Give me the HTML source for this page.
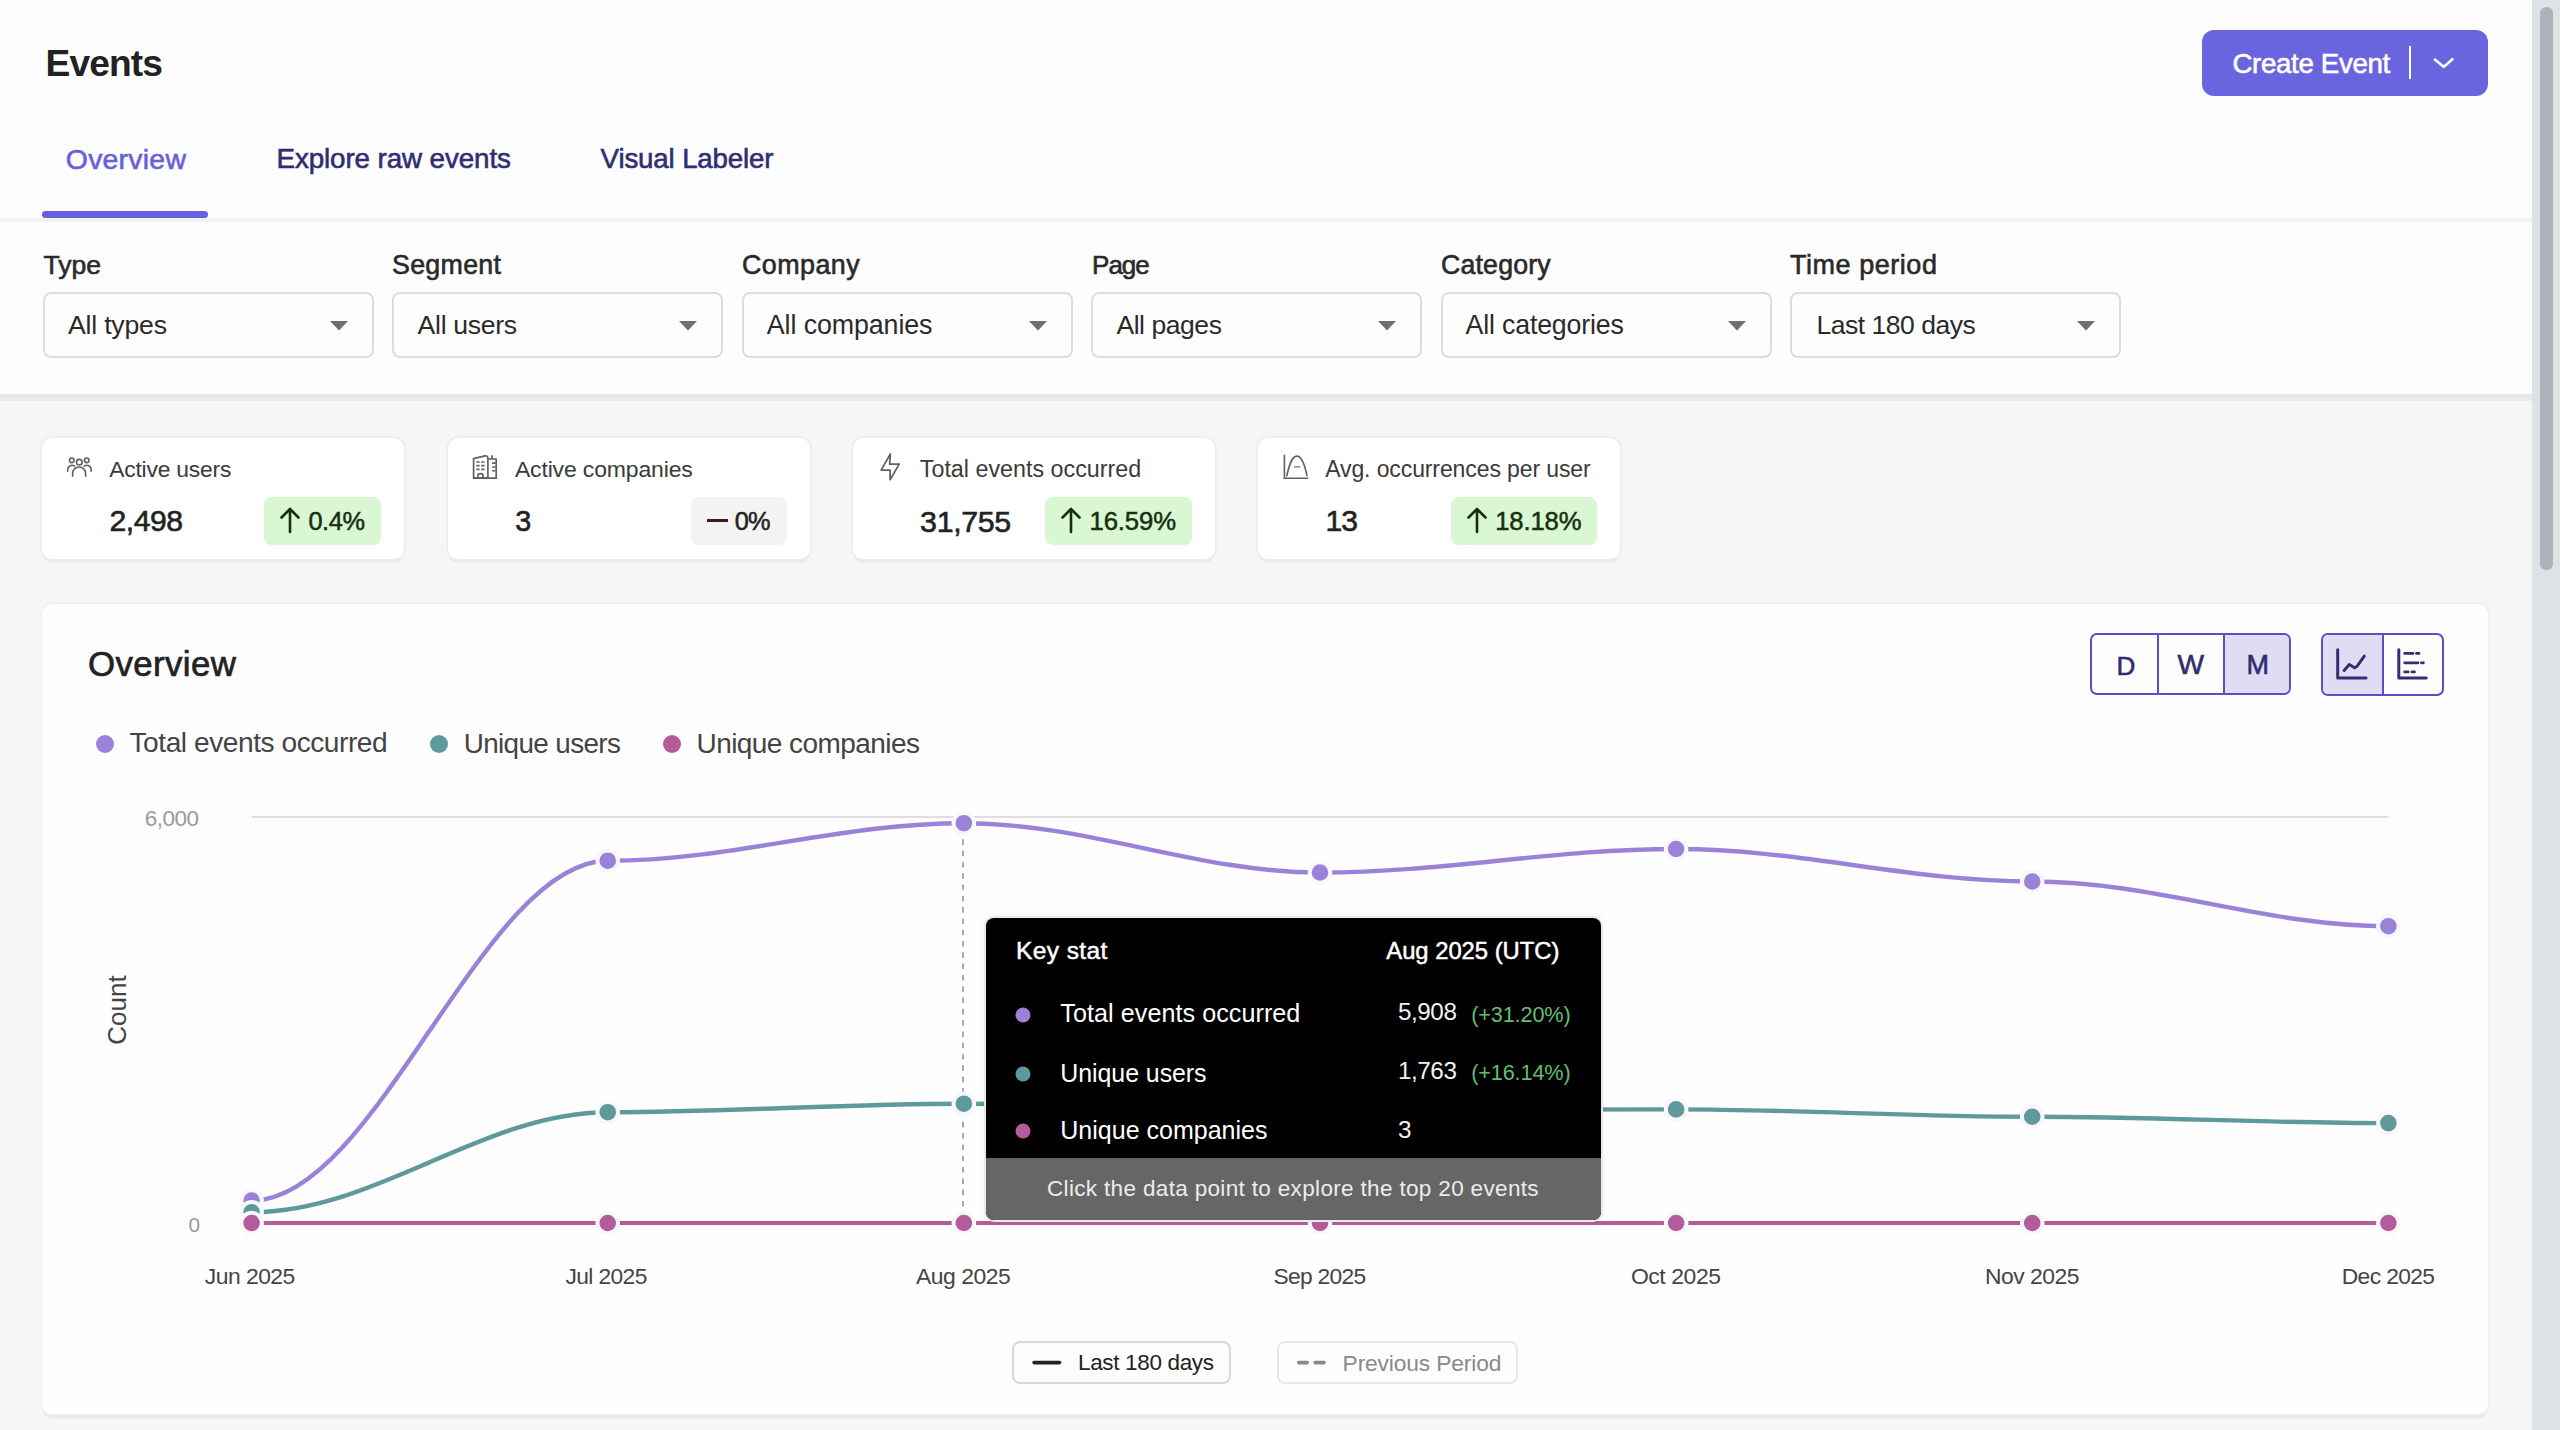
<!DOCTYPE html>
<html><head><meta charset="utf-8"><title>Events</title>
<style>
html,body{margin:0;padding:0;width:2560px;height:1430px;overflow:hidden;background:#f6f6f6;font-family:"Liberation Sans",sans-serif}
.t{position:absolute;white-space:nowrap;line-height:1;font-family:"Liberation Sans",sans-serif}
</style></head><body>
<div style="position:absolute;left:0;top:0;width:2532px;height:218px;background:#fdfdfd"></div>
<div style="position:absolute;left:0;top:218px;width:2532px;height:4px;background:#f1f2f3"></div>
<div style="position:absolute;left:0;top:222px;width:2532px;height:171.5px;background:#fdfdfd"></div>
<div style="position:absolute;left:0;top:393.5px;width:2532px;height:4px;background:#e5e8ea"></div>
<div style="position:absolute;left:0;top:397.5px;width:2532px;height:3.5px;background:#ebebeb"></div>
<div style="position:absolute;left:2532px;top:0;width:28px;height:1430px;background:#dfe2e5"></div>
<div style="position:absolute;left:2540px;top:7px;width:12.5px;height:563px;background:#adb3bb;border-radius:6px"></div>
<div class="t" style="left:45.60px;top:45.04px;font-size:37.16px;font-weight:700;color:#222222;letter-spacing:-0.890px;">Events</div>
<div style="position:absolute;left:2202px;top:29.6px;width:285.7px;height:66px;background:#6965df;border-radius:12px"></div>
<div class="t" style="left:2232.40px;top:49.75px;font-size:27.70px;font-weight:400;color:#ffffff;letter-spacing:-0.341px;-webkit-text-stroke:0.6px #ffffff;">Create Event</div>
<div style="position:absolute;left:2409px;top:46px;width:2px;height:33px;background:#ffffff"></div>
<svg style="position:absolute;left:2420px;top:45px" width="50" height="35"><polyline points="14.9,14.6 23.7,21.9 32.4,14.2" fill="none" stroke="#fff" stroke-width="2.6" stroke-linecap="round" stroke-linejoin="miter"/></svg>
<div class="t" style="left:65.80px;top:144.71px;font-size:28.40px;font-weight:400;color:#6760dc;letter-spacing:0.252px;-webkit-text-stroke:0.6px #6760dc;">Overview</div>
<div class="t" style="left:276.50px;top:145.24px;font-size:27.78px;font-weight:400;color:#302e72;letter-spacing:-0.101px;-webkit-text-stroke:0.6px #302e72;">Explore raw events</div>
<div class="t" style="left:600.60px;top:145.32px;font-size:27.68px;font-weight:400;color:#302e72;letter-spacing:-0.146px;-webkit-text-stroke:0.6px #302e72;">Visual Labeler</div>
<div style="position:absolute;left:42.3px;top:211px;width:166px;height:7px;background:#6760dc;border-radius:4px"></div>
<div class="t" style="left:43.40px;top:251.99px;font-size:26.59px;font-weight:400;color:#2a2a2a;letter-spacing:-0.015px;-webkit-text-stroke:0.6px #2a2a2a;">Type</div>
<div style="position:absolute;left:43.00px;top:292px;width:331px;height:66px;box-sizing:border-box;border:2px solid #dcdbe9;border-radius:8px;background:#fdfdfd"></div>
<div class="t" style="left:68.00px;top:311.91px;font-size:26.68px;font-weight:400;color:#2a2a2a;letter-spacing:-0.229px;">All types</div>
<svg style="position:absolute;left:330.00px;top:321px" width="18" height="10"><polygon points="0,0 18,0 9,9.5" fill="#6f6f6f"/></svg>
<div class="t" style="left:392.00px;top:251.82px;font-size:26.79px;font-weight:400;color:#2a2a2a;letter-spacing:0.298px;-webkit-text-stroke:0.6px #2a2a2a;">Segment</div>
<div style="position:absolute;left:392.40px;top:292px;width:331px;height:66px;box-sizing:border-box;border:2px solid #dcdbe9;border-radius:8px;background:#fdfdfd"></div>
<div class="t" style="left:417.60px;top:311.97px;font-size:26.61px;font-weight:400;color:#2a2a2a;letter-spacing:-0.308px;">All users</div>
<svg style="position:absolute;left:679.40px;top:321px" width="18" height="10"><polygon points="0,0 18,0 9,9.5" fill="#6f6f6f"/></svg>
<div class="t" style="left:742.00px;top:251.76px;font-size:26.87px;font-weight:400;color:#2a2a2a;letter-spacing:0.450px;-webkit-text-stroke:0.6px #2a2a2a;">Company</div>
<div style="position:absolute;left:741.80px;top:292px;width:331px;height:66px;box-sizing:border-box;border:2px solid #dcdbe9;border-radius:8px;background:#fdfdfd"></div>
<div class="t" style="left:766.80px;top:311.81px;font-size:26.81px;font-weight:400;color:#2a2a2a;letter-spacing:-0.098px;">All companies</div>
<svg style="position:absolute;left:1028.80px;top:321px" width="18" height="10"><polygon points="0,0 18,0 9,9.5" fill="#6f6f6f"/></svg>
<div class="t" style="left:1092.10px;top:252.47px;font-size:26.02px;font-weight:400;color:#2a2a2a;letter-spacing:-1.052px;-webkit-text-stroke:0.6px #2a2a2a;">Page</div>
<div style="position:absolute;left:1091.20px;top:292px;width:331px;height:66px;box-sizing:border-box;border:2px solid #dcdbe9;border-radius:8px;background:#fdfdfd"></div>
<div class="t" style="left:1116.40px;top:312.05px;font-size:26.52px;font-weight:400;color:#2a2a2a;letter-spacing:-0.448px;">All pages</div>
<svg style="position:absolute;left:1378.20px;top:321px" width="18" height="10"><polygon points="0,0 18,0 9,9.5" fill="#6f6f6f"/></svg>
<div class="t" style="left:1441.00px;top:251.87px;font-size:26.73px;font-weight:400;color:#2a2a2a;letter-spacing:0.176px;-webkit-text-stroke:0.6px #2a2a2a;">Category</div>
<div style="position:absolute;left:1440.60px;top:292px;width:331px;height:66px;box-sizing:border-box;border:2px solid #dcdbe9;border-radius:8px;background:#fdfdfd"></div>
<div class="t" style="left:1465.60px;top:311.87px;font-size:26.73px;font-weight:400;color:#2a2a2a;letter-spacing:-0.173px;">All categories</div>
<svg style="position:absolute;left:1727.60px;top:321px" width="18" height="10"><polygon points="0,0 18,0 9,9.5" fill="#6f6f6f"/></svg>
<div class="t" style="left:1790.00px;top:251.62px;font-size:27.03px;font-weight:400;color:#2a2a2a;letter-spacing:0.528px;-webkit-text-stroke:0.6px #2a2a2a;">Time period</div>
<div style="position:absolute;left:1790.00px;top:292px;width:331px;height:66px;box-sizing:border-box;border:2px solid #dcdbe9;border-radius:8px;background:#fdfdfd"></div>
<div class="t" style="left:1816.40px;top:312.07px;font-size:26.50px;font-weight:400;color:#2a2a2a;letter-spacing:-0.469px;">Last 180 days</div>
<svg style="position:absolute;left:2077.00px;top:321px" width="18" height="10"><polygon points="0,0 18,0 9,9.5" fill="#6f6f6f"/></svg>
<div style="position:absolute;left:42.2px;top:438px;width:361.8px;height:121px;background:#ffffff;border-radius:10px;box-shadow:0 0 0 1.6px #ececed, 0 3.6px 0 0 #e8e9ea"></div>
<div class="t" style="left:109.20px;top:458.26px;font-size:22.85px;font-weight:400;color:#3a3a3a;letter-spacing:-0.202px;">Active users</div>
<div class="t" style="left:109.50px;top:506.06px;font-size:30.17px;font-weight:400;color:#222222;letter-spacing:-0.495px;-webkit-text-stroke:0.6px #222222;">2,498</div>
<div style="position:absolute;left:263.9px;top:496.6px;width:117.1px;height:48px;background:#d8f7d2;border-radius:8px"></div>
<svg style="position:absolute;left:279.9px;top:506px" width="22" height="28"><path d="M10 26 V3 M1.5 11.5 L10 3 L18.5 11.5" fill="none" stroke="#16300f" stroke-width="2.6" stroke-linecap="round" stroke-linejoin="round"/></svg>
<div class="t" style="left:308.40px;top:508.94px;font-size:25.35px;font-weight:400;color:#16300f;letter-spacing:-0.394px;-webkit-text-stroke:0.5px #16300f;">0.4%</div>
<div style="position:absolute;left:447.9px;top:438px;width:361.8px;height:121px;background:#ffffff;border-radius:10px;box-shadow:0 0 0 1.6px #ececed, 0 3.6px 0 0 #e8e9ea"></div>
<div class="t" style="left:514.90px;top:458.14px;font-size:22.98px;font-weight:400;color:#3a3a3a;letter-spacing:-0.142px;">Active companies</div>
<div class="t" style="left:515.20px;top:507.23px;font-size:28.79px;font-weight:400;color:#222222;letter-spacing:0.000px;-webkit-text-stroke:0.6px #222222;">3</div>
<div style="position:absolute;left:691px;top:496.6px;width:96.0px;height:48px;background:#f3f3f4;border-radius:8px"></div>
<div style="position:absolute;left:707.4px;top:519px;width:21px;height:2.6px;background:#3a1a1f"></div>
<div class="t" style="left:734.80px;top:508.96px;font-size:25.32px;font-weight:400;color:#222222;letter-spacing:-0.793px;-webkit-text-stroke:0.5px #222222;">0%</div>
<div style="position:absolute;left:852.8px;top:438px;width:361.8px;height:121px;background:#ffffff;border-radius:10px;box-shadow:0 0 0 1.6px #ececed, 0 3.6px 0 0 #e8e9ea"></div>
<div class="t" style="left:919.80px;top:457.89px;font-size:23.28px;font-weight:400;color:#3a3a3a;letter-spacing:0.011px;">Total events occurred</div>
<div class="t" style="left:920.10px;top:505.88px;font-size:30.39px;font-weight:400;color:#222222;letter-spacing:-0.350px;-webkit-text-stroke:0.6px #222222;">31,755</div>
<div style="position:absolute;left:1045px;top:496.6px;width:147.0px;height:48px;background:#d8f7d2;border-radius:8px"></div>
<svg style="position:absolute;left:1061.0px;top:506px" width="22" height="28"><path d="M10 26 V3 M1.5 11.5 L10 3 L18.5 11.5" fill="none" stroke="#16300f" stroke-width="2.6" stroke-linecap="round" stroke-linejoin="round"/></svg>
<div class="t" style="left:1089.50px;top:508.66px;font-size:25.69px;font-weight:400;color:#16300f;letter-spacing:-0.126px;-webkit-text-stroke:0.5px #16300f;">16.59%</div>
<div style="position:absolute;left:1258.2px;top:438px;width:361.8px;height:121px;background:#ffffff;border-radius:10px;box-shadow:0 0 0 1.6px #ececed, 0 3.6px 0 0 #e8e9ea"></div>
<div class="t" style="left:1325.20px;top:458.11px;font-size:23.02px;font-weight:400;color:#3a3a3a;letter-spacing:-0.113px;">Avg. occurrences per user</div>
<div class="t" style="left:1325.50px;top:506.13px;font-size:30.09px;font-weight:400;color:#222222;letter-spacing:-0.963px;-webkit-text-stroke:0.6px #222222;">13</div>
<div style="position:absolute;left:1450.7px;top:496.6px;width:146.8px;height:48px;background:#d8f7d2;border-radius:8px"></div>
<svg style="position:absolute;left:1466.7px;top:506px" width="22" height="28"><path d="M10 26 V3 M1.5 11.5 L10 3 L18.5 11.5" fill="none" stroke="#16300f" stroke-width="2.6" stroke-linecap="round" stroke-linejoin="round"/></svg>
<div class="t" style="left:1495.20px;top:508.68px;font-size:25.66px;font-weight:400;color:#16300f;letter-spacing:-0.146px;-webkit-text-stroke:0.5px #16300f;">18.18%</div>
<svg style="position:absolute;left:60px;top:450px" width="40" height="35" viewBox="0 0 40 35" fill="none" stroke="#5f6062" stroke-width="1.6" stroke-linecap="round">
<circle cx="11.75" cy="10.3" r="2.3"/><circle cx="19.3" cy="12.2" r="2.8"/><circle cx="26.7" cy="10.3" r="2.3"/>
<path d="M12.6 26.2 V23.5 A6.5 6.5 0 0 1 25.6 23.5 V26.2"/>
<path d="M7.7 21.3 V19.6 A4.3 4.3 0 0 1 14.6 16.2"/>
<path d="M31.2 21.3 V19.6 A4.3 4.3 0 0 0 24.3 16.2"/>
</svg>
<svg style="position:absolute;left:472px;top:448px" width="32" height="36" viewBox="0 0 32 36" fill="none" stroke="#5f6062" stroke-width="1.7" stroke-linejoin="round">
<path d="M1.6 30.2 V10.6 L13 7.8 Q15.9 7.5 15.9 10.6 V30.2 Z"/>
<path d="M15.9 11 H24.2 V30.2 H1.6"/>
<path d="M20 11 V7.3"/>
<path d="M6 30.2 V27.2 Q6 25.7 8.5 25.7 Q11 25.7 11 27.2 V30.2"/>
<g stroke-width="1.6"><path d="M4.3 14 H7.6 M9.2 14 H12.6 M4.3 17.6 H7.6 M9.2 17.6 H12.6 M4.3 21.4 H7.6 M9.2 21.4 H12.6 M20.1 15.1 H23.7 M20.1 19 H23.7 M20.1 22.8 H23.7"/></g>
</svg>
<svg style="position:absolute;left:872px;top:448px" width="36" height="36" viewBox="0 0 36 36" fill="none" stroke="#5f6062" stroke-width="1.7" stroke-linejoin="round" stroke-linecap="round">
<path d="M18.4 6 L9.1 22.2 H18.1 V31.7 L27.2 16.1 H17.6 Z"/>
</svg>
<svg style="position:absolute;left:1276px;top:448px" width="36" height="36" viewBox="0 0 36 36" fill="none" stroke="#5f6062" stroke-width="1.6" stroke-linecap="round">
<path d="M8.4 7.3 V30.2 H31.7"/>
<path d="M10.8 27.7 C13 18 15.5 8.1 20.9 8.1 C26.3 8.1 29 18 31 27.7"/>
<path d="M18.6 18.9 H23.9" stroke="#9a9a9a"/>
</svg>
<div style="position:absolute;left:42.2px;top:603.8px;width:2445.8px;height:810.2px;background:#fefefe;border-radius:10px;box-shadow:0 0 0 1.2px #efeff0, 0 4.6px 0 0 #e8e9ea"></div>
<div class="t" style="left:88.00px;top:646.52px;font-size:34.82px;font-weight:400;color:#222222;letter-spacing:0.398px;-webkit-text-stroke:0.7px #222222;">Overview</div>
<div style="position:absolute;left:2090.1px;top:633.1px;width:200.6px;height:62.3px;box-sizing:border-box;border:2px solid #5551c0;border-radius:7px;overflow:hidden;background:#fdfdfd"><div style="position:absolute;left:131.3px;top:0;width:66px;height:60px;background:#dfdcf4"></div><div style="position:absolute;left:65.3px;top:0;width:2px;height:60px;background:#5551c0"></div><div style="position:absolute;left:131.3px;top:0;width:2px;height:60px;background:#5551c0"></div></div>
<div class="t" style="left:2116.50px;top:652.56px;font-size:26.04px;font-weight:400;color:#302d6e;letter-spacing:0.000px;-webkit-text-stroke:0.6px #302d6e;">D</div>
<div class="t" style="left:2177.50px;top:650.78px;font-size:28.13px;font-weight:400;color:#302d6e;letter-spacing:0.000px;-webkit-text-stroke:0.6px #302d6e;">W</div>
<div class="t" style="left:2246.40px;top:651.76px;font-size:26.99px;font-weight:400;color:#302d6e;letter-spacing:0.000px;-webkit-text-stroke:0.6px #302d6e;">M</div>
<div style="position:absolute;left:2320.5px;top:633px;width:123.3px;height:62.5px;box-sizing:border-box;border:2px solid #5551c0;border-radius:7px;overflow:hidden;background:#fdfdfd"><div style="position:absolute;left:0;top:0;width:60px;height:60px;background:#dfdcf4"></div><div style="position:absolute;left:59.8px;top:0;width:2px;height:60px;background:#5551c0"></div></div>
<svg style="position:absolute;left:2320px;top:632px" width="126" height="66" viewBox="0 0 126 66" fill="none" stroke="#332f6f" stroke-width="3" stroke-linecap="round" stroke-linejoin="round">
<path d="M17.7 17.7 V46 H46"/>
<path d="M24.1 38.4 L29.3 32.5 L34.5 35.7 L36.9 34.5 L44.3 24.1"/>
<path d="M78.8 17.7 V46 H106.3"/>
<path d="M84.7 21.4 H93 M96.5 21.4 H99 M84.7 30.8 H98 M101.4 30.8 H103.4 M84.7 39.9 H88.2 M92 39.9 H94.5" stroke-width="2.8"/>
</svg>
<svg style="position:absolute;left:95px;top:733.7px" width="20" height="20"><circle cx="10" cy="10" r="9" fill="#9b82d9"/></svg>
<div class="t" style="left:129.50px;top:729.49px;font-size:28.12px;font-weight:400;color:#444444;letter-spacing:-0.450px;">Total events occurred</div>
<svg style="position:absolute;left:429px;top:733.7px" width="20" height="20"><circle cx="10" cy="10" r="9" fill="#5e9a9b"/></svg>
<div class="t" style="left:463.70px;top:729.70px;font-size:27.88px;font-weight:400;color:#444444;letter-spacing:-0.635px;">Unique users</div>
<svg style="position:absolute;left:662px;top:733.7px" width="20" height="20"><circle cx="10" cy="10" r="9" fill="#b35b9b"/></svg>
<div class="t" style="left:696.50px;top:729.58px;font-size:28.03px;font-weight:400;color:#444444;letter-spacing:-0.576px;">Unique companies</div>
<svg style="position:absolute;left:0;top:0" width="2560" height="1430">
<line x1="251.7" y1="817" x2="2388.5" y2="817" stroke="#dedede" stroke-width="2"/>
<path d="M251.60 1200.50 C376.25 1200.50 483.08 860.70 607.73 860.70 C732.38 860.70 839.21 823.20 963.86 823.20 C1088.51 823.20 1195.34 872.50 1319.99 872.50 C1444.64 872.50 1551.47 849.00 1676.12 849.00 C1800.77 849.00 1907.60 881.50 2032.25 881.50 C2156.90 881.50 2263.73 926.20 2388.38 926.20" fill="none" stroke="#9b82d9" stroke-width="4.4"/>
<path d="M251.60 1212.20 C376.25 1212.20 483.08 1112.20 607.73 1112.20 C732.38 1112.20 839.21 1103.70 963.86 1103.70 C1088.51 1103.70 1195.34 1110.00 1319.99 1110.00 C1444.64 1110.00 1551.47 1109.40 1676.12 1109.40 C1800.77 1109.40 1907.60 1116.75 2032.25 1116.75 C2156.90 1116.75 2263.73 1123.10 2388.38 1123.10" fill="none" stroke="#5e9a9b" stroke-width="4.4"/>
<path d="M251.60 1223.00 C376.25 1223.00 483.08 1223.00 607.73 1223.00 C732.38 1223.00 839.21 1223.00 963.86 1223.00 C1088.51 1223.00 1195.34 1223.00 1319.99 1223.00 C1444.64 1223.00 1551.47 1223.00 1676.12 1223.00 C1800.77 1223.00 1907.60 1223.00 2032.25 1223.00 C2156.90 1223.00 2263.73 1223.00 2388.38 1223.00" fill="none" stroke="#b35b9b" stroke-width="4.2"/>
<line x1="963" y1="839.3" x2="963" y2="1223" stroke="#ababab" stroke-width="2" stroke-dasharray="5.6 5.7"/>
<circle cx="251.60" cy="1200.50" r="10.3" fill="#9b82d9" stroke="#f8f7fc" stroke-width="4"/>
<circle cx="607.73" cy="860.70" r="10.3" fill="#9b82d9" stroke="#f8f7fc" stroke-width="4"/>
<circle cx="963.86" cy="823.20" r="10.3" fill="#9b82d9" stroke="#f8f7fc" stroke-width="4"/>
<circle cx="1319.99" cy="872.50" r="10.3" fill="#9b82d9" stroke="#f8f7fc" stroke-width="4"/>
<circle cx="1676.12" cy="849.00" r="10.3" fill="#9b82d9" stroke="#f8f7fc" stroke-width="4"/>
<circle cx="2032.25" cy="881.50" r="10.3" fill="#9b82d9" stroke="#f8f7fc" stroke-width="4"/>
<circle cx="2388.38" cy="926.20" r="10.3" fill="#9b82d9" stroke="#f8f7fc" stroke-width="4"/>
<circle cx="251.60" cy="1212.20" r="10.3" fill="#5e9a9b" stroke="#f8f7fc" stroke-width="4"/>
<circle cx="607.73" cy="1112.20" r="10.3" fill="#5e9a9b" stroke="#f8f7fc" stroke-width="4"/>
<circle cx="963.86" cy="1103.70" r="10.3" fill="#5e9a9b" stroke="#f8f7fc" stroke-width="4"/>
<circle cx="1319.99" cy="1110.00" r="10.3" fill="#5e9a9b" stroke="#f8f7fc" stroke-width="4"/>
<circle cx="1676.12" cy="1109.40" r="10.3" fill="#5e9a9b" stroke="#f8f7fc" stroke-width="4"/>
<circle cx="2032.25" cy="1116.75" r="10.3" fill="#5e9a9b" stroke="#f8f7fc" stroke-width="4"/>
<circle cx="2388.38" cy="1123.10" r="10.3" fill="#5e9a9b" stroke="#f8f7fc" stroke-width="4"/>
<circle cx="251.60" cy="1223.00" r="10.3" fill="#b35b9b" stroke="#f8f7fc" stroke-width="4"/>
<circle cx="607.73" cy="1223.00" r="10.3" fill="#b35b9b" stroke="#f8f7fc" stroke-width="4"/>
<circle cx="963.86" cy="1223.00" r="10.3" fill="#b35b9b" stroke="#f8f7fc" stroke-width="4"/>
<circle cx="1319.99" cy="1223.00" r="10.3" fill="#b35b9b" stroke="#f8f7fc" stroke-width="4"/>
<circle cx="1676.12" cy="1223.00" r="10.3" fill="#b35b9b" stroke="#f8f7fc" stroke-width="4"/>
<circle cx="2032.25" cy="1223.00" r="10.3" fill="#b35b9b" stroke="#f8f7fc" stroke-width="4"/>
<circle cx="2388.38" cy="1223.00" r="10.3" fill="#b35b9b" stroke="#f8f7fc" stroke-width="4"/>
</svg>
<div class="t" style="left:144.70px;top:807.57px;font-size:22.48px;font-weight:400;color:#9a9a9a;letter-spacing:-0.486px;">6,000</div>
<div class="t" style="left:188.60px;top:1215.20px;font-size:20.80px;font-weight:400;color:#9a9a9a;letter-spacing:0.000px;">0</div>
<div class="t" style="left:204.80px;top:1265.03px;font-size:22.88px;font-weight:400;color:#444444;letter-spacing:-0.520px;">Jun 2025</div>
<div class="t" style="left:565.40px;top:1265.11px;font-size:22.79px;font-weight:400;color:#444444;letter-spacing:-0.593px;">Jul 2025</div>
<div class="t" style="left:916.00px;top:1265.00px;font-size:22.91px;font-weight:400;color:#444444;letter-spacing:-0.488px;">Aug 2025</div>
<div class="t" style="left:1273.40px;top:1265.12px;font-size:22.78px;font-weight:400;color:#444444;letter-spacing:-0.678px;">Sep 2025</div>
<div class="t" style="left:1630.90px;top:1264.98px;font-size:22.94px;font-weight:400;color:#444444;letter-spacing:-0.427px;">Oct 2025</div>
<div class="t" style="left:1985.00px;top:1265.01px;font-size:22.90px;font-weight:400;color:#444444;letter-spacing:-0.506px;">Nov 2025</div>
<div class="t" style="left:2341.80px;top:1265.09px;font-size:22.81px;font-weight:400;color:#444444;letter-spacing:-0.636px;">Dec 2025</div>
<div style="position:absolute;left:117px;top:1009.5px;width:0;height:0"><div class="t" style="left:-40px;top:-12px;width:80px;text-align:center;font-size:26px;color:#444;transform:rotate(-90deg);transform-origin:40px 12px;line-height:24px">Count</div></div>
<div style="position:absolute;left:986px;top:917.8px;width:615px;height:302.7px;background:#000;border-radius:8px;overflow:hidden;box-shadow:0 0 0 2px #e9e9ec, 0 0 6px 2px rgba(0,0,0,0.05)"><div style="position:absolute;left:0;top:239.8px;width:615px;height:63px;background:#666666"></div></div>
<div class="t" style="left:1016.00px;top:938.80px;font-size:24.57px;font-weight:400;color:#ffffff;letter-spacing:0.377px;-webkit-text-stroke:0.5px #ffffff;">Key stat</div>
<div class="t" style="left:1386.30px;top:939.45px;font-size:23.81px;font-weight:400;color:#ffffff;letter-spacing:-0.018px;-webkit-text-stroke:0.5px #ffffff;">Aug 2025 (UTC)</div>
<svg style="position:absolute;left:1014.9px;top:1006.8px" width="16" height="16"><circle cx="8" cy="8" r="7.5" fill="#9b82d9"/></svg>
<div class="t" style="left:1060.30px;top:1001.23px;font-size:25.13px;font-weight:400;color:#ffffff;letter-spacing:0.062px;">Total events occurred</div>
<div class="t" style="left:1397.90px;top:1000.22px;font-size:24.31px;font-weight:400;color:#f2f2f2;letter-spacing:-0.431px;">5,908</div>
<div class="t" style="left:1471.20px;top:1003.64px;font-size:21.69px;font-weight:400;color:#5fbf6f;letter-spacing:-0.149px;">(+31.20%)</div>
<svg style="position:absolute;left:1014.9px;top:1065.6px" width="16" height="16"><circle cx="8" cy="8" r="7.5" fill="#5e9a9b"/></svg>
<div class="t" style="left:1060.30px;top:1060.71px;font-size:24.92px;font-weight:400;color:#ffffff;letter-spacing:-0.045px;">Unique users</div>
<div class="t" style="left:1397.90px;top:1058.92px;font-size:24.31px;font-weight:400;color:#f2f2f2;letter-spacing:-0.431px;">1,763</div>
<div class="t" style="left:1471.20px;top:1062.34px;font-size:21.69px;font-weight:400;color:#5fbf6f;letter-spacing:-0.149px;">(+16.14%)</div>
<svg style="position:absolute;left:1014.9px;top:1123.0px" width="16" height="16"><circle cx="8" cy="8" r="7.5" fill="#b35b9b"/></svg>
<div class="t" style="left:1060.30px;top:1118.13px;font-size:25.01px;font-weight:400;color:#ffffff;letter-spacing:0.007px;">Unique companies</div>
<div class="t" style="left:1397.90px;top:1118.22px;font-size:24.31px;font-weight:400;color:#f2f2f2;letter-spacing:0.000px;">3</div>
<div class="t" style="left:1047.00px;top:1177.62px;font-size:22.54px;font-weight:400;color:#ececec;letter-spacing:0.326px;">Click the data point to explore the top 20 events</div>
<div style="position:absolute;left:1012px;top:1341px;width:219px;height:43px;box-sizing:border-box;border:2px solid #d6d8db;border-radius:8px;background:#fdfdfd"></div>
<svg style="position:absolute;left:1020px;top:1350px" width="50" height="25"><line x1="14.1" y1="12.6" x2="39.6" y2="12.6" stroke="#222" stroke-width="3.6" stroke-linecap="round"/></svg>
<div class="t" style="left:1078.00px;top:1351.87px;font-size:22.48px;font-weight:400;color:#222222;letter-spacing:-0.330px;">Last 180 days</div>
<div style="position:absolute;left:1277px;top:1341px;width:240.8px;height:43px;box-sizing:border-box;border:2px solid #e7e8ea;border-radius:8px;background:#fdfdfd"></div>
<svg style="position:absolute;left:1290px;top:1350px" width="50" height="25"><path d="M8.7 12.6 H17.2 M25.1 12.6 H34" stroke="#888" stroke-width="3.6" stroke-linecap="round"/></svg>
<div class="t" style="left:1342.60px;top:1351.59px;font-size:22.81px;font-weight:400;color:#8a8a8a;letter-spacing:-0.151px;">Previous Period</div>
</body></html>
